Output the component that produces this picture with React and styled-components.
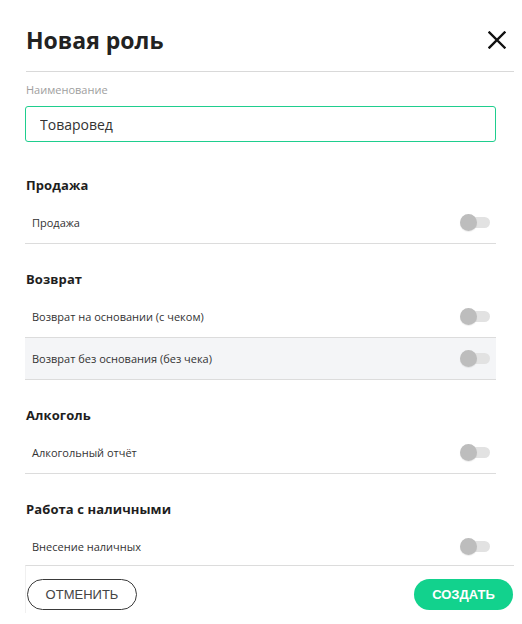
import styled, { createGlobalStyle } from "styled-components";

const GlobalStyle = createGlobalStyle`
  * {
    box-sizing: border-box;
  }
  body {
    margin: 0;
    background: #fff;
    font-family: "Open Sans", "Noto Sans", sans-serif;
    color: #333;
  }
`;

const Modal = styled.div`
  width: 522px;
  height: 624px;
  padding: 0 8px 0 25px;
  display: flex;
  flex-direction: column;
  overflow: hidden;
`;

const Header = styled.div`
  display: flex;
  align-items: center;
  justify-content: space-between;
  padding: 24px 8px 15px 0;
  border-bottom: 1px solid #d9d9d9;
  margin-left: 1px;
`;

const Title = styled.h1`
  margin: 0;
  font-size: 23px;
  line-height: 32px;
  font-weight: 700;
  color: #222;
`;

const CloseButton = styled.button`
  border: none;
  background: none;
  padding: 0;
  width: 18px;
  height: 18px;
  display: flex;
  cursor: pointer;
`;

const Scroll = styled.div`
  height: 493px;
  overflow: hidden;
  padding-right: 18px;
`;

const Label = styled.div`
  margin-top: 10px;
  font-size: 11px;
  line-height: 15px;
  color: #9e9e9e;
  padding-left: 1px;
`;

const Input = styled.input`
  display: block;
  width: 471px;
  height: 36px;
  margin-top: 9px;
  padding: 0 14px;
  border: 1px solid #1fce8e;
  border-radius: 3px;
  font-family: "Open Sans", sans-serif;
  font-size: 14px;
  color: #333;
  outline: none;
`;

const Section = styled.section`
  margin-top: ${(p) => (p.$first ? "34px" : "26px")};
`;

const SectionTitle = styled.h2`
  margin: 0 0 8px 1px;
  font-size: 13px;
  line-height: 18px;
  font-weight: 700;
  color: #1e1e1e;
  letter-spacing: 0.1px;
`;

const Row = styled.div`
  display: flex;
  align-items: center;
  justify-content: space-between;
  height: 42px;
  padding: 0 6px 0 7px;
  border-bottom: 1px solid #dcdcdc;
  background: ${(p) => (p.$shaded ? "#f4f5f7" : "transparent")};
  font-size: 11px;
  color: #333;
`;

const Toggle = styled.span`
  position: relative;
  width: 30px;
  height: 17px;
  display: inline-block;
`;

const Track = styled.span`
  position: absolute;
  left: 4px;
  right: 0;
  top: 3px;
  height: 11px;
  border-radius: 6px;
  background: #e2e2e2;
`;

const Knob = styled.span`
  position: absolute;
  left: 0;
  top: 0;
  width: 17px;
  height: 17px;
  border-radius: 50%;
  background: #bdbdbd;
  box-shadow: 0 1px 1px rgba(0, 0, 0, 0.08);
`;

const Footer = styled.div`
  display: flex;
  justify-content: space-between;
  align-items: flex-start;
  height: 48px;
  padding: 13px 1px 0 1px;
  border-top: 1px solid #dcdcdc;
  border-left: 1px solid #f0f0f0;
`;

const Button = styled.button`
  height: 31px;
  border-radius: 16px;
  font-family: "Liberation Sans", Arial, sans-serif;
  font-size: 13px;
  cursor: pointer;
  padding: 0;
  width: ${(p) => p.$width}px;
  border: ${(p) => (p.$primary ? "none" : "1px solid #3a3a3a")};
  background: ${(p) => (p.$primary ? "#12d28d" : "#fff")};
  color: ${(p) => (p.$primary ? "#fff" : "#444")};
  font-weight: ${(p) => (p.$primary ? 700 : 400)};
`;

const sections = [
  { title: "Продажа", items: ["Продажа"] },
  {
    title: "Возврат",
    items: ["Возврат на основании (с чеком)", "Возврат без основания (без чека)"],
  },
  { title: "Алкоголь", items: ["Алкогольный отчёт"] },
  { title: "Работа с наличными", items: ["Внесение наличных"] },
];

const Switch = () => (
  <Toggle>
    <Track />
    <Knob />
  </Toggle>
);

export default function App() {
  return (
    <>
      <GlobalStyle />
      <Modal>
        <Header>
          <Title>Новая роль</Title>
          <CloseButton aria-label="Закрыть">
            <svg width="18" height="18" viewBox="0 0 18 18">
              <path
                d="M1.5 1.5 L16.5 16.5 M16.5 1.5 L1.5 16.5"
                stroke="#111"
                strokeWidth="2.4"
                strokeLinecap="square"
              />
            </svg>
          </CloseButton>
        </Header>
        <Scroll>
          <Label>Наименование</Label>
          <Input defaultValue="Товаровед" />
          {sections.map((s, i) => (
            <Section key={s.title} $first={i === 0}>
              <SectionTitle>{s.title}</SectionTitle>
              {s.items.map((item, j) => (
                <Row key={item} $shaded={i === 1 && j === 1}>
                  <span>{item}</span>
                  <Switch />
                </Row>
              ))}
            </Section>
          ))}
        </Scroll>
        <Footer>
          <Button $width={110}>ОТМЕНИТЬ</Button>
          <Button $primary $width={99}>
            СОЗДАТЬ
          </Button>
        </Footer>
      </Modal>
    </>
  );
}
